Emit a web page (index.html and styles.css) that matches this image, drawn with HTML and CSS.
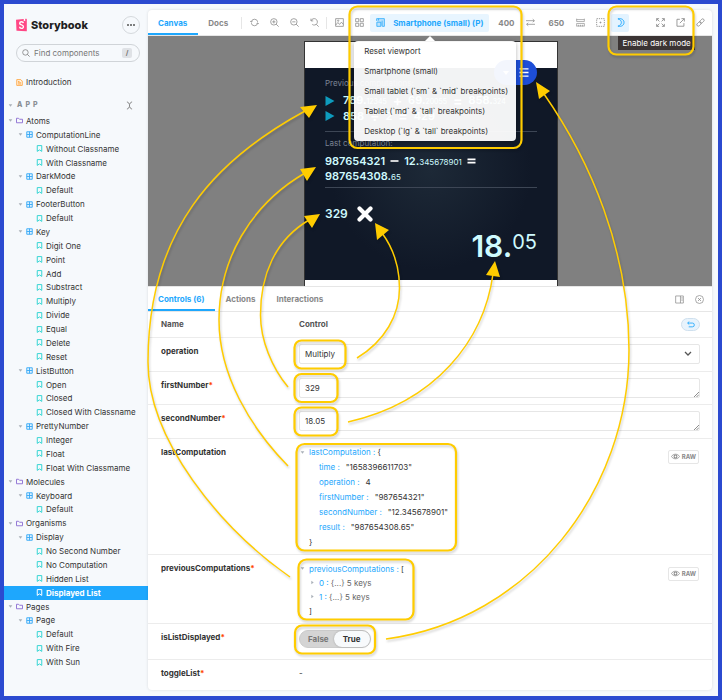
FILE: index.html
```html
<!DOCTYPE html>
<html lang="en">
<head>
<meta charset="utf-8">
<title>Storybook</title>
<link rel="stylesheet" href="styles.css">
</head>
<body>
<svg class="defs" aria-hidden="true">
  <symbol id="i-caret" viewBox="0 0 6 6"><path d="M.8 1.6h4.4L3 4.4z" fill="#a9b0b8"/></symbol>
  <symbol id="i-folder" viewBox="0 0 14 14"><path d="M1 2.5h4l2 2h6v7H1z" fill="none" stroke="#8a6bd1" stroke-width="1.8" stroke-linejoin="round"/></symbol>
  <symbol id="i-comp" viewBox="0 0 14 14"><path d="M1.5 1.5h11v11h-11zM7 1.500v11M1.500 7h11" fill="#dff2ff" stroke="#37a8f5" stroke-width="1.8" stroke-linejoin="round"/></symbol>
  <symbol id="i-story" viewBox="0 0 14 14"><path d="M2.500 1.200h9v11.600L7 9.800l-4.500 3z" fill="none" stroke="currentColor" stroke-width="2" stroke-linejoin="round"/></symbol>
  <symbol id="i-doc" viewBox="0 0 14 14"><path d="M1.500 1.200h8l3 3v8.600h-11zM4 5h3M4 7.500h6M4 10h6" fill="#fff3e2" stroke="#ff9d2e" stroke-width="1.600"/></symbol>
  <symbol id="i-search" viewBox="0 0 14 14"><circle cx="6" cy="6" r="4.800" fill="none" stroke="currentColor" stroke-width="1.300"/><path d="M9.500 9.500L13.300 13.300" stroke="currentColor" stroke-width="1.400"/></symbol>
  <symbol id="i-sync" viewBox="0 0 14 14"><g fill="none" stroke="currentColor" stroke-width="1.200"><path d="M2 6a5.100 5.100 0 0 1 10 0M12 8a5.100 5.100 0 0 1-10 0"/><path d="M.2 4.500L2 6.500l2-1.500M13.800 9.500L12 7.500 10 9"/></g></symbol>
  <symbol id="i-zin" viewBox="0 0 14 14"><g fill="none" stroke="currentColor" stroke-width="1.200"><circle cx="6" cy="6" r="5"/><path d="M9.600 9.600l3.900 3.900M3.500 6h5M6 3.500v5"/></g></symbol>
  <symbol id="i-zout" viewBox="0 0 14 14"><g fill="none" stroke="currentColor" stroke-width="1.200"><circle cx="6" cy="6" r="5"/><path d="M9.600 9.600l3.900 3.900M3.500 6h5"/></g></symbol>
  <symbol id="i-zreset" viewBox="0 0 14 14"><g fill="none" stroke="currentColor" stroke-width="1.200"><path d="M1.500 1v3.500H5M1.800 4.200A5 5 0 1 1 3.500 10M9.600 9.600l3.900 3.900"/></g></symbol>
  <symbol id="i-photo" viewBox="0 0 14 14"><g fill="none" stroke="currentColor" stroke-width="1.200"><path d="M1 1h12v12H1zM1 11l3.500-4 2.500 3 3-3.500 3 3.500"/><circle cx="5" cy="4.200" r="1"/></g></symbol>
  <symbol id="i-grid" viewBox="0 0 14 14"><path d="M1 1h4.800v4.800H1zM8.200 1H13v4.800H8.200zM1 8.200h4.800V13H1zM8.200 8.200H13V13H8.200z" fill="none" stroke="currentColor" stroke-width="1.200"/></symbol>
  <symbol id="i-grow" viewBox="0 0 14 14"><path d="M1 4.500V1h12v12H9.800M1.300 6.500h6.200V13H1.300zM9.500 4v9M4 1v3" fill="#bfe2fb" stroke="currentColor" stroke-width="1.200"/></symbol>
  <symbol id="i-transfer" viewBox="0 0 14 14"><path d="M0 4.200h13M10.500 1.800L13 4.200l-2.500 2.400M14 9.800H1M3.500 7.400L1 9.800l2.500 2.400" fill="none" stroke="currentColor" stroke-width="1.200"/></symbol>
  <symbol id="i-ruler" viewBox="0 0 14 14"><path d="M1 1v4.500h12V1M1 2.500h12M1 13V8.500h12V13M4 10.500V13M7 10.500V13M10 10.500V13M1 12.500h12" fill="none" stroke="currentColor" stroke-width="1"/></symbol>
  <symbol id="i-outline" viewBox="0 0 14 14"><path d="M1 1h12v12H1z" fill="none" stroke="currentColor" stroke-width="1.300" stroke-dasharray="2 1.430"/><path d="M5.500 7h3M7 5.500v3" stroke="currentColor" stroke-width="1"/></symbol>
  <symbol id="i-moon" viewBox="0 0 14 14"><path d="M3 1.300C9 0 12.500 3 12.500 7S9 14 3 12.700C6.500 11.500 8.300 9.500 8.300 7S6.500 2.500 3 1.300z" fill="#d3ecff" stroke="currentColor" stroke-width="1.400" stroke-linejoin="round"/></symbol>
  <symbol id="i-expand" viewBox="0 0 14 14"><path d="M1 4.800V1h3.800M9.200 1H13v3.800M13 9.200V13H9.200M4.800 13H1V9.200M1 1l4.300 4.300M13 1L8.700 5.300M13 13L8.700 8.700M1 13l4.300-4.300" fill="none" stroke="currentColor" stroke-width="1.300"/></symbol>
  <symbol id="i-share" viewBox="0 0 14 14"><path d="M6 2H1.500v10.800h10.800V8M8.500 1H13v4.500M13 1L6 8" fill="none" stroke="currentColor" stroke-width="1.300"/></symbol>
  <symbol id="i-link" viewBox="0 0 14 14"><g fill="none" stroke="currentColor" stroke-width="1.200"><rect x="-3.800" y="-2.200" width="7.600" height="4.400" rx="2.200" transform="translate(9.300 4.700) rotate(-45)"/><rect x="-3.800" y="-2.200" width="7.600" height="4.400" rx="2.200" transform="translate(4.700 9.300) rotate(-45)"/></g></symbol>
  <symbol id="i-side" viewBox="0 0 14 14"><path d="M1 1.500h12v11H1zM8.500 1.500v11M10 4.200h1.800M10 6.200h1.800M10 8.200h1.800" fill="none" stroke="currentColor" stroke-width="1.100"/></symbol>
  <symbol id="i-close" viewBox="0 0 14 14"><circle cx="7" cy="7" r="6.200" fill="none" stroke="currentColor" stroke-width="1.100"/><path d="M4.700 4.700l4.600 4.600M9.300 4.700L4.700 9.300" stroke="currentColor" stroke-width="1.200"/></symbol>
  <symbol id="i-undo" viewBox="0 0 14 12"><path d="M1.200 3.500h8.300a3.200 3.200 0 0 1 0 6.600H3M4 .8L1.200 3.500 4 6.200" fill="none" stroke="currentColor" stroke-width="1.500"/></symbol>
  <symbol id="i-eye" viewBox="0 0 14 10"><path d="M.7 5C3.500.3 10.500.3 13.300 5 10.500 9.700 3.500 9.700.7 5z" fill="none" stroke="currentColor" stroke-width="1.200"/><circle cx="7" cy="5" r="2.200" fill="none" stroke="currentColor" stroke-width="1.600"/></symbol>
  <symbol id="i-collapse" viewBox="0 0 10 14"><path d="M1 1.500h1L5 5l3-3.500h1M1 12.500h1L5 9l3 3.500h1M5 5v4" fill="none" stroke="currentColor" stroke-width="1.400"/></symbol>
</svg>

<div class="app">
  <aside class="sidebar">
    <header class="brand">
      <svg class="brand-mark" viewBox="0 0 12 14" aria-hidden="true"><path d="M0 1.200L11.200.3q.6 0 .6.600v12.300q0 .6-.6.600L1.100 13.400q-.6 0-.6-.6z" fill="#ff4785"/><path d="M8.500 0l1.500-.1.1 3-.8-.6-.9.700z" fill="#fff"/><path d="M8 5C7.800 3 4.100 3 4 5.100 3.900 7.400 8.100 6.500 8.100 8.900 8.100 11.300 3.900 11.100 3.900 9" fill="none" stroke="#fff" stroke-width="1.500"/></svg>
      <span class="brand-name">Storybook</span>
      <button class="more" aria-label="Shortcuts"><i></i><i></i><i></i></button>
    </header>
    <label class="search">
      <svg class="ic"><use href="#i-search"/></svg>
      <input type="text" placeholder="Find components" aria-label="Find components">
      <kbd>/</kbd>
    </label>
    <a class="intro" href="#"><svg class="tic"><use href="#i-doc"/></svg>Introduction</a>
    <div class="section">
      <svg class="caret"><use href="#i-caret"/></svg><span>APP</span>
      <button aria-label="Collapse all"><svg class="ic"><use href="#i-collapse"/></svg></button>
    </div>
    <nav class="tree">
      <a class="d0" href="#"><svg class="caret"><use href="#i-caret"/></svg><svg class="tic"><use href="#i-folder"/></svg>Atoms</a>
      <a class="d1" href="#"><svg class="caret"><use href="#i-caret"/></svg><svg class="tic"><use href="#i-comp"/></svg>ComputationLine</a>
      <a class="d2" href="#"><svg class="tic"><use href="#i-story"/></svg>Without Classname</a>
      <a class="d2" href="#"><svg class="tic"><use href="#i-story"/></svg>With Classname</a>
      <a class="d1" href="#"><svg class="caret"><use href="#i-caret"/></svg><svg class="tic"><use href="#i-comp"/></svg>DarkMode</a>
      <a class="d2" href="#"><svg class="tic"><use href="#i-story"/></svg>Default</a>
      <a class="d1" href="#"><svg class="caret"><use href="#i-caret"/></svg><svg class="tic"><use href="#i-comp"/></svg>FooterButton</a>
      <a class="d2" href="#"><svg class="tic"><use href="#i-story"/></svg>Default</a>
      <a class="d1" href="#"><svg class="caret"><use href="#i-caret"/></svg><svg class="tic"><use href="#i-comp"/></svg>Key</a>
      <a class="d2" href="#"><svg class="tic"><use href="#i-story"/></svg>Digit One</a>
      <a class="d2" href="#"><svg class="tic"><use href="#i-story"/></svg>Point</a>
      <a class="d2" href="#"><svg class="tic"><use href="#i-story"/></svg>Add</a>
      <a class="d2" href="#"><svg class="tic"><use href="#i-story"/></svg>Substract</a>
      <a class="d2" href="#"><svg class="tic"><use href="#i-story"/></svg>Multiply</a>
      <a class="d2" href="#"><svg class="tic"><use href="#i-story"/></svg>Divide</a>
      <a class="d2" href="#"><svg class="tic"><use href="#i-story"/></svg>Equal</a>
      <a class="d2" href="#"><svg class="tic"><use href="#i-story"/></svg>Delete</a>
      <a class="d2" href="#"><svg class="tic"><use href="#i-story"/></svg>Reset</a>
      <a class="d1" href="#"><svg class="caret"><use href="#i-caret"/></svg><svg class="tic"><use href="#i-comp"/></svg>ListButton</a>
      <a class="d2" href="#"><svg class="tic"><use href="#i-story"/></svg>Open</a>
      <a class="d2" href="#"><svg class="tic"><use href="#i-story"/></svg>Closed</a>
      <a class="d2" href="#"><svg class="tic"><use href="#i-story"/></svg>Closed With Classname</a>
      <a class="d1" href="#"><svg class="caret"><use href="#i-caret"/></svg><svg class="tic"><use href="#i-comp"/></svg>PrettyNumber</a>
      <a class="d2" href="#"><svg class="tic"><use href="#i-story"/></svg>Integer</a>
      <a class="d2" href="#"><svg class="tic"><use href="#i-story"/></svg>Float</a>
      <a class="d2" href="#"><svg class="tic"><use href="#i-story"/></svg>Float With Classmame</a>
      <a class="d0" href="#"><svg class="caret"><use href="#i-caret"/></svg><svg class="tic"><use href="#i-folder"/></svg>Molecules</a>
      <a class="d1" href="#"><svg class="caret"><use href="#i-caret"/></svg><svg class="tic"><use href="#i-comp"/></svg>Keyboard</a>
      <a class="d2" href="#"><svg class="tic"><use href="#i-story"/></svg>Default</a>
      <a class="d0" href="#"><svg class="caret"><use href="#i-caret"/></svg><svg class="tic"><use href="#i-folder"/></svg>Organisms</a>
      <a class="d1" href="#"><svg class="caret"><use href="#i-caret"/></svg><svg class="tic"><use href="#i-comp"/></svg>Display</a>
      <a class="d2" href="#"><svg class="tic"><use href="#i-story"/></svg>No Second Number</a>
      <a class="d2" href="#"><svg class="tic"><use href="#i-story"/></svg>No Computation</a>
      <a class="d2" href="#"><svg class="tic"><use href="#i-story"/></svg>Hidden List</a>
      <a class="d2 current" href="#" aria-current="page"><svg class="tic"><use href="#i-story"/></svg>Displayed List</a>
      <a class="d0" href="#"><svg class="caret"><use href="#i-caret"/></svg><svg class="tic"><use href="#i-folder"/></svg>Pages</a>
      <a class="d1" href="#"><svg class="caret"><use href="#i-caret"/></svg><svg class="tic"><use href="#i-comp"/></svg>Page</a>
      <a class="d2" href="#"><svg class="tic"><use href="#i-story"/></svg>Default</a>
      <a class="d2" href="#"><svg class="tic"><use href="#i-story"/></svg>With Fire</a>
      <a class="d2" href="#"><svg class="tic"><use href="#i-story"/></svg>With Sun</a>
    </nav>
  </aside>

  <main class="main">
    <div class="toolbar">
      <button class="tab active">Canvas</button>
      <button class="tab">Docs</button>
      <span class="sep"></span>
      <button class="tool" aria-label="Remount"><svg class="ic"><use href="#i-sync"/></svg></button>
      <button class="tool" aria-label="Zoom in"><svg class="ic"><use href="#i-zin"/></svg></button>
      <button class="tool" aria-label="Zoom out"><svg class="ic"><use href="#i-zout"/></svg></button>
      <button class="tool" aria-label="Reset zoom"><svg class="ic"><use href="#i-zreset"/></svg></button>
      <span class="sep"></span>
      <button class="tool" aria-label="Background"><svg class="ic"><use href="#i-photo"/></svg></button>
      <button class="tool" aria-label="Grid"><svg class="ic"><use href="#i-grid"/></svg></button>
      <div class="viewport">
        <button class="viewport-btn"><svg class="ic"><use href="#i-grow"/></svg>Smartphone (small) (P)</button>
        <div class="menu">
          <button>Reset viewport</button>
          <button>Smartphone (small)</button>
          <button>Small tablet (`sm` &amp; `mid` breakpoints)</button>
          <button>Tablet (`md` &amp; `tall` breakpoints)</button>
          <button>Desktop (`lg` &amp; `tall` breakpoints)</button>
        </div>
      </div>
      <span class="size">400</span>
      <button class="tool" aria-label="Rotate viewport"><svg class="ic"><use href="#i-transfer"/></svg></button>
      <span class="size">650</span>
      <button class="tool" aria-label="Measure"><svg class="ic"><use href="#i-ruler"/></svg></button>
      <button class="tool" aria-label="Outline"><svg class="ic"><use href="#i-outline"/></svg></button>
      <div class="dark">
        <button class="tool on" aria-label="Dark mode"><svg class="ic"><use href="#i-moon"/></svg></button>
        <span class="tooltip" role="tooltip">Enable dark mode</span>
      </div>
      <span class="push"></span>
      <button class="tool" aria-label="Full screen"><svg class="ic"><use href="#i-expand"/></svg></button>
      <button class="tool" aria-label="Open in new tab"><svg class="ic"><use href="#i-share"/></svg></button>
      <button class="tool" aria-label="Copy link"><svg class="ic"><use href="#i-link"/></svg></button>
    </div>

    <section class="stage">
      <div class="device">
        <div class="calc">
          <button class="list-btn" aria-label="Hide list"><svg class="tri" viewBox="0 0 8 8"><path d="M1 2h6L4 6z" fill="#fff"/></svg><svg class="bars" viewBox="0 0 10 10"><path d="M0 1h10M0 5h10M0 9h10" stroke="#fff" stroke-width="1.500"/></svg></button>
          <p class="cap">Previous computations:</p>
          <p class="line"><svg class="play" viewBox="0 0 10 10"><path d="M.5 0L9.500 5 .5 10z" fill="#0e9bbd"/></svg><b>789.<small>12345</small></b> <b class="op">+</b> <b>69.<small>20055</small></b> <b class="op">=</b> <b>858.<small>324</small></b></p>
          <p class="line"><svg class="play" viewBox="0 0 10 10"><path d="M.5 0L9.500 5 .5 10z" fill="#0e9bbd"/></svg><b>858</b> <b class="op">÷</b> <b>2</b> <b class="op">=</b> <b>429</b></p>
          <hr>
          <p class="cap">Last computation:</p>
          <p class="last"><b>987654321</b> <svg class="sign" viewBox="0 0 10 10"><path d="M0 5h10" stroke="#fff" stroke-width="2"/></svg> <b>12.<small>345678901</small></b> <svg class="sign" viewBox="0 0 10 10"><path d="M0 3h10M0 7h10" stroke="#fff" stroke-width="2"/></svg><br><b>987654308.<small>65</small></b></p>
          <hr>
          <p class="first"><b>329</b><svg class="times" viewBox="0 0 16 16"><path d="M2.500 2.500l11 11M13.500 2.500l-11 11" stroke="#fff" stroke-width="4.200" stroke-linecap="round"/></svg></p>
          <p class="big"><b>18.</b><span>05</span></p>
        </div>
      </div>
    </section>

    <div class="panel-tabs">
      <button class="tab active">Controls (6)</button>
      <button class="tab">Actions</button>
      <button class="tab">Interactions</button>
      <span class="push"></span>
      <button class="tool" aria-label="Panel position"><svg class="ic"><use href="#i-side"/></svg></button>
      <button class="tool" aria-label="Close panel"><svg class="ic"><use href="#i-close"/></svg></button>
    </div>

    <table class="controls">
      <thead>
        <tr><th scope="col">Name</th><th scope="col"><div class="split">Control<button class="reset" aria-label="Reset controls"><svg><use href="#i-undo"/></svg></button></div></th></tr>
      </thead>
      <tbody>
        <tr class="field"><th scope="row"><label for="op">operation</label></th><td><select id="op"><option>Multiply</option></select></td></tr>
        <tr class="field"><th scope="row"><label for="n1">firstNumber<em>*</em></label></th><td><div class="area"><textarea id="n1" rows="1">329</textarea><svg class="grip" viewBox="0 0 6 6"><path d="M0 6l6-6M3 6l3-3" stroke="#666" stroke-width=".9"/></svg></div></td></tr>
        <tr class="field"><th scope="row"><label for="n2">secondNumber<em>*</em></label></th><td><div class="area"><textarea id="n2" rows="1">18.05</textarea><svg class="grip" viewBox="0 0 6 6"><path d="M0 6l6-6M3 6l3-3" stroke="#666" stroke-width=".9"/></svg></div></td></tr>
        <tr class="object"><th scope="row">lastComputation</th><td><div class="split">
          <ul class="json">
            <li><svg class="caret"><use href="#i-caret"/></svg><i>lastComputation : </i>{</li>
            <li class="kv"><i>time :</i>"1658396611703"</li>
            <li class="kv"><i>operation :</i>4</li>
            <li class="kv"><i>firstNumber :</i>"987654321"</li>
            <li class="kv"><i>secondNumber :</i>"12.345678901"</li>
            <li class="kv"><i>result :</i>"987654308.65"</li>
            <li class="end">}</li>
          </ul>
          <button class="raw"><svg><use href="#i-eye"/></svg>RAW</button></div></td></tr>
        <tr class="array"><th scope="row">previousComputations<em>*</em></th><td><div class="split">
          <ul class="json">
            <li><svg class="caret"><use href="#i-caret"/></svg><i>previousComputations : </i>[</li>
            <li class="item"><svg class="caret side"><use href="#i-caret"/></svg><i>0 : </i><span>{...} 5 keys</span></li>
            <li class="item"><svg class="caret side"><use href="#i-caret"/></svg><i>1 : </i><span>{...} 5 keys</span></li>
            <li class="end">]</li>
          </ul>
          <button class="raw"><svg><use href="#i-eye"/></svg>RAW</button></div></td></tr>
        <tr class="bool"><th scope="row">isListDisplayed<em>*</em></th><td><label class="switch"><input type="checkbox" checked aria-label="isListDisplayed"><span>False</span><span class="yes">True</span></label></td></tr>
        <tr class="none"><th scope="row">toggleList<em>*</em></th><td>-</td></tr>
      </tbody>
    </table>
  </main>

  <svg class="notes" viewBox="0 0 722 700" aria-hidden="true">
    <g fill="none" stroke="#fc0" stroke-width="2.200">
      <rect x="349.500" y="6.500" width="172" height="141.500" rx="8"/>
      <rect x="608.500" y="6.500" width="85" height="48" rx="8"/>
      <rect x="294.500" y="340.500" width="51" height="28" rx="7"/>
      <rect x="294.500" y="374" width="43" height="28" rx="7"/>
      <rect x="294.500" y="407.500" width="43" height="28" rx="7"/>
      <rect x="296.500" y="444" width="159.500" height="106.500" rx="8"/>
      <rect x="298.500" y="559.500" width="115" height="60" rx="8"/>
      <rect x="295" y="625.500" width="80" height="28" rx="7"/>
    </g>
    <g fill="none" stroke="#fc0" stroke-width="1.500">
      <path d="M290 577C220 528 148 440 148 362C148 230 215 160 305 111"/>
      <path d="M288 466C250 427 219 375 219 320C219 260 250 205 305 173"/>
      <path d="M288 387C272 368 260.500 340 260.500 315C260.500 275 275 240 309 220"/>
      <path d="M357 358C385 341 399.500 315 399.500 288C399.500 268 393 248 382 233"/>
      <path d="M348 422C436 402 484 340 493 274"/>
      <path d="M386 639C530 620 629 490 629 350C629 250 590 160 544 94"/>
    </g>
    <path fill="#fc0" d="M317 105l-17 2 9 11zM316 167l-16 2 7 12zM320 214l-16 2 8 12zM375 223l14 7-12 10zM495 261l-9 14 14 2zM536 82l14 9-11 8z"/>
  </svg>
</div>
</body>
</html>
```
FILE: styles.css
```css
* { box-sizing: border-box; }
body {
  margin: 0;
  font: 8px/12px Inter, "Liberation Sans", sans-serif;
  color: #333;
}
button, input, select, textarea { font: inherit; color: inherit; }
button { border: 0; background: none; padding: 0; margin: 0; cursor: pointer; }
a { color: inherit; text-decoration: none; }
p, ul { margin: 0; padding: 0; list-style: none; }
i, em { font-style: normal; }
svg { display: block; flex: none; }
.defs { display: none; }

.app {
  position: relative;
  display: grid;
  grid-template-columns: 144px minmax(0, 1fr);
  min-height: 100vh;
  border: 4px solid #2b4ad0;
  background: #f6f9fc;
}
.notes {
  position: absolute;
  top: -4px;
  left: -4px;
  width: 722px;
  height: 700px;
  pointer-events: none;
  z-index: 5;
  filter: drop-shadow(1px 2px 1px rgba(0, 0, 0, .18));
}
.ic { width: 9px; height: 9px; }
.caret { width: 5px; height: 5px; }
.push { flex: 1; }

/* Sidebar */
.sidebar { display: flex; flex-direction: column; padding: 12px 0 27px; }
.brand { display: flex; align-items: center; gap: 4px; height: 18px; padding: 0 8px 0 12px; }
.brand-mark { width: 11px; height: 14px; }
.brand-name { flex: 1; font-size: 11px; font-weight: 800; color: #1f1f1f; }
.more {
  display: flex; align-items: center; justify-content: center; gap: 1px;
  width: 18px; height: 18px; border: 1px solid #d5d9dd; border-radius: 50%;
}
.more i { width: 2px; height: 2px; border-radius: 50%; background: #555; }
.search {
  display: flex; align-items: center; gap: 4px;
  height: 18px; margin: 10px 8px 0 12px; padding: 0 7px 0 5px;
  border: 1px solid #d0d4d8; border-radius: 9px; color: #777;
}
.search .ic { width: 8px; height: 8px; }
.search input { flex: 1; min-width: 0; padding: 0; border: 0; outline: 0; background: none; }
.search input::placeholder { color: #777; opacity: 1; }
.search kbd {
  width: 10px; height: 10px; border-radius: 2px; background: #dfe2e6;
  font: 700 7px/10px Inter, sans-serif; text-align: center;
}
.intro { display: flex; align-items: center; gap: 3px; margin-top: 13px; padding-left: 12px; height: 14px; }
.tic { width: 7px; height: 7px; color: #37d5d3; }
.section {
  display: flex; align-items: center; gap: 4px; height: 14px; margin: 9px 15px 2px 4px;
  font-size: 7px; font-weight: 800; letter-spacing: 3px; color: #8a8f94;
}
.section span { flex: 1; }
.section .ic { width: 7px; color: #777; }
.tree { flex: 1; display: grid; grid-auto-rows: 1fr; }
.tree a { display: flex; align-items: center; gap: 3px; min-height: 13px; }
.tree .d0 { padding-left: 4px; }
.tree .d1 { padding-left: 14px; }
.tree .d2 { padding-left: 32px; }
.tree .current { background: #1ea7fd; color: #fff; font-weight: 700; }
.tree .current .tic { color: #fff; }

/* Main column */
.main {
  display: flex; flex-direction: column; margin: 6px; margin-left: 0;
  background: #fff; border-radius: 4px; box-shadow: 0 0 3px rgba(0, 0, 0, .12);
}
.toolbar, .panel-tabs { display: flex; align-items: center; height: 26px; border-bottom: 1px solid #e6e6e6; color: #888; }
.toolbar { padding-right: 2px; }
.tab { align-self: stretch; padding: 0 11px 0 10px; border: solid transparent; border-width: 2px 0; font-weight: 700; color: #888; }
.tab.active { border-bottom-color: #1ea7fd; color: #1ea7fd; }
.tool { display: flex; align-items: center; justify-content: center; width: 18px; height: 18px; margin: 0 1px; border-radius: 2px; color: #888; }
.tool.on { background: #e3f3ff; color: #1ea7fd; }
.sep { width: 1px; height: 12px; margin: 0 2px; background: #e6e6e6; }
.viewport, .dark { position: relative; }
.viewport-btn {
  display: flex; align-items: center; gap: 8px; height: 18px; padding: 0 6px; margin: 0 1px;
  border-radius: 2px; background: #e8f5ff; color: #1ea7fd; font-weight: 700;
}
.size { width: 20px; margin: 0 4px 0 6px; font-weight: 700; text-align: center; }
.menu {
  position: absolute; top: 27px; left: -15px; z-index: 3;
  width: 162px; border-radius: 4px; background: rgba(255, 255, 255, .95);
  box-shadow: 0 1px 4px rgba(0, 0, 0, .3); color: #333;
}
.menu::before {
  content: ""; position: absolute; left: 50%; top: -5px; margin-left: -10px;
  border: solid transparent; border-width: 0 5px 5px; border-bottom-color: #fff;
}
.menu button { display: block; width: 100%; height: 20px; padding: 0 10px; text-align: left; white-space: nowrap; }
.tooltip {
  position: absolute; top: 22px; left: 8px; z-index: 3; padding: 1px 4px;
  background: #3b3434; color: #fff; white-space: nowrap;
}

/* Preview */
.stage { display: flex; justify-content: center; height: 250px; padding: 5px 0 0 2px; background: #808080; overflow: hidden; }
.device { width: 254px; height: 245px; padding: 26px 0 6px; border: 1px solid #333; border-bottom: 0; background: #fff; }
.calc {
  position: relative; height: 212px; padding: 9px 20px 0; color: #cffafe;
  background: radial-gradient(circle at 50% 48%, #1d2937, #101827 60%);
}
.calc b { font-weight: 600; }
.list-btn {
  position: absolute; top: -8px; right: 20px; display: flex; align-items: center; gap: 9px;
  height: 25px; padding: 0 8px; border-radius: 13px; background: #1d4ed8;
}
.tri { width: 8px; height: 8px; }
.bars { width: 10px; height: 9px; }
.cap { color: #7b8494; line-height: 12px; }
.line { display: flex; align-items: center; gap: 6px; height: 15px; font-size: 11px; }
.line .play { margin-right: 2px; }
.cap + .line { margin-top: 4px; }
.line small, .last small { font-size: 8px; font-weight: 400; }
.line small { font-size: 7px; }
.op { color: #fff; font-size: 14px; }
.play { width: 10px; height: 10px; }
.calc hr { height: 1px; margin: 8px 0 5px; border: 0; background: #3d4655; }
.last { margin-top: 5px; font-size: 11px; line-height: 14px; }
.calc .last + hr { margin-top: 3px; }
.sign { display: inline-block; width: 9px; height: 8px; margin: 0 2px; }
.first { display: flex; align-items: center; gap: 9px; margin-top: 17px; font-size: 12px; line-height: 18px; }
.times { width: 16px; height: 16px; }
.big { display: flex; justify-content: flex-end; font-size: 30px; line-height: 36px; margin-top: 5px; }
.big span { font-size: 20px; line-height: 28px; }

/* Addon panel */
.panel-tabs { border-top: 1px solid #e6e6e6; padding-right: 3px; }
.controls { width: 100%; border-collapse: collapse; color: #333; }
.controls th, .controls td { padding: 7px 0 0; border-top: 1px solid #ececec; text-align: left; vertical-align: top; font-weight: 700; }
.controls td { padding: 6px 12px 0 0; font-weight: 400; }
.controls th:first-child { width: 151px; padding-left: 13px; }
.controls thead th { height: 25px; padding: 6px 12px 0 0; border-top: 0; color: #555; }
.controls em { color: #ff4400; }
.split { display: flex; align-items: flex-start; justify-content: space-between; }
.reset {
  display: flex; align-items: center; justify-content: center; width: 19px; height: 13px;
  border: 1px solid #cfe0ee; border-radius: 7px; background: #e8f3fc; color: #1ea7fd;
}
.reset svg { width: 8px; height: 7px; }
.field td { height: 34px; }
.field:nth-child(2) td { height: 33px; }
select, textarea {
  display: block; width: 100%; height: 20px; margin: 0; padding: 3px 5px;
  border: 1px solid #e6e6e6; border-radius: 2px; background: #fff; outline: 0; line-height: 12px;
}
select {
  appearance: none;
  background: #fff url("data:image/svg+xml,%3Csvg xmlns='http://www.w3.org/2000/svg' viewBox='0 0 8 6'%3E%3Cpath d='M1 1l3 3 3-3' fill='none' stroke='%23555' stroke-width='1.300'/%3E%3C/svg%3E") no-repeat right 7px center / 8px 6px;
}
textarea { resize: none; overflow: hidden; }
.area { position: relative; }
.grip { position: absolute; right: 1px; bottom: 1px; width: 5px; height: 5px; }
.object td { height: 116px; line-height: 15px; }
.array td { height: 69px; line-height: 14px; padding-top: 7px; }
.bool td { height: 36px; }
.none td { height: 31px; padding-top: 7px; }
.json li { display: flex; align-items: center; white-space: pre; }
.json i { color: #1ea7fd; }
.json .caret { margin: 0 4px 0 1px; }
.json .side { transform: rotate(-90deg); }
.json .kv { padding-left: 20px; gap: 6px; }
.json .item { padding-left: 10px; color: #666; }
.json .end { padding-left: 10px; }
.raw {
  display: flex; align-items: center; gap: 2px; height: 14px; margin: 5px 1px 0 0; padding: 0 2px;
  border: 1px solid #e6e6e6; border-radius: 2px; background: #fff; color: #888; font-size: 6px; font-weight: 700;
}
.raw svg { width: 9px; height: 7px; }
.switch { position: relative; display: flex; width: max-content; align-items: stretch; height: 18px; border: 1px solid #ccc; border-radius: 9px; background: #d4d4d4; color: #777; font-weight: 700; line-height: 16px; }
.switch input { position: absolute; inset: 0; width: 100%; height: 100%; margin: 0; opacity: 0; }
.switch span { padding: 0 5px 0 8px; }
.switch .yes { padding: 0 9px; border-radius: 8px; background: #f8fafc; color: #333; box-shadow: 0 0 2px rgba(0, 0, 0, .25); }
```
